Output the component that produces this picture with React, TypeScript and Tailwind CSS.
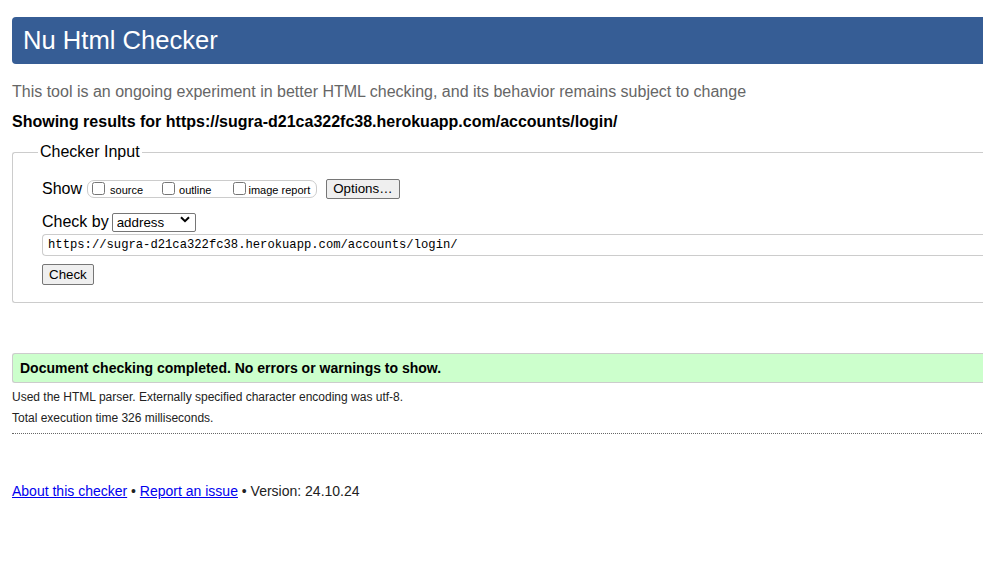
import { useState } from 'react'

const url = 'https://sugra-d21ca322fc38.herokuapp.com/accounts/login/'

function Chevron() {
  return (
    <svg width="10" height="7" viewBox="0 0 10 7" className="pointer-events-none absolute right-[6px] top-[6px]">
      <path d="M1 1.2 L5 5.2 L9 1.2" fill="none" stroke="#000" strokeWidth="2" />
    </svg>
  )
}

export default function App() {
  const [checks, setChecks] = useState({ source: false, outline: false, images: false })
  const [doc, setDoc] = useState(url)

  return (
    <div className="min-h-[563px] w-full overflow-hidden bg-white font-['Liberation_Sans',Arial,sans-serif] text-black">
      <div className="w-[1100px] pl-3 pt-[17px]">
        <h1 className="h-[47px] rounded-l-[4px] bg-[#365d95] pl-[11px] text-[25.6px] leading-[47px] text-white">
          Nu Html Checker
        </h1>
        <p className="mt-[19px] text-[16px] leading-[18px] text-[#666]">
          This tool is an ongoing experiment in better HTML checking, and its behavior remains subject to change
        </p>
        <p className="mt-[12px] text-[16px] font-bold leading-[18px]">Showing results for {url}</p>

        <fieldset className="mt-[12px] rounded-l-[3px] border border-r-0 border-[#ccc] pb-[17px] pl-[29px] pt-[17px]">
          <legend className="-ml-[4px] px-[2px] text-[16px] leading-[18px]">Checker Input</legend>

          <div className="flex h-[21px] items-center">
            <span className="text-[16px] leading-[18px]">Show</span>
            <div className="ml-[5px] flex h-[18px] items-center rounded-[7px] border border-[#ccc] pl-[4px] pr-[6px] text-[11px]">
              <label className="flex items-center">
                <input
                  type="checkbox"
                  className="m-0 h-[13px] w-[13px]"
                  checked={checks.source}
                  onChange={() => setChecks({ ...checks, source: !checks.source })}
                />
                <span className="ml-[5px] pt-[3px]">source</span>
              </label>
              <label className="ml-[19px] flex items-center">
                <input
                  type="checkbox"
                  className="m-0 h-[13px] w-[13px]"
                  checked={checks.outline}
                  onChange={() => setChecks({ ...checks, outline: !checks.outline })}
                />
                <span className="ml-[4px] pt-[3px]">outline</span>
              </label>
              <label className="ml-[22px] flex items-center">
                <input
                  type="checkbox"
                  className="m-0 h-[13px] w-[13px]"
                  checked={checks.images}
                  onChange={() => setChecks({ ...checks, images: !checks.images })}
                />
                <span className="ml-[2px] pt-[3px]">image report</span>
              </label>
            </div>
            <button className="ml-[9px] h-[20px] rounded-[2px] border border-[#767676] bg-[#efefef] px-[6px] text-[13.33px] leading-[18px]">
              Options…
            </button>
          </div>

          <div className="mt-[13px] flex h-[20px] items-center">
            <span className="text-[16px] leading-[18px]">Check by</span>
            <div className="relative ml-[3px]">
              <select className="h-[19px] w-[84px] appearance-none rounded-[2px] border border-[#767676] bg-white pl-[4px] text-[13.33px] leading-[17px]">
                <option>address</option>
                <option>file upload</option>
                <option>text input</option>
              </select>
              <Chevron />
            </div>
          </div>

          <input
            type="text"
            value={doc}
            onChange={(e) => setDoc(e.target.value)}
            className="mt-[2px] block h-[22px] w-full rounded-l-[4px] border border-r-0 border-[#ccc] pl-[5px] font-['Liberation_Mono','Courier_New',monospace] text-[12.2px] outline-none"
          />

          <button className="mt-[8px] block h-[21px] rounded-[2px] border border-[#767676] bg-[#efefef] px-[6px] text-[13.33px] leading-[19px]">
            Check
          </button>
        </fieldset>

        <div className="mt-[50px] h-[30px] rounded-l-[3px] border border-r-0 border-[#ccc] bg-[#ccffcc] pl-[7px] text-[14px] font-bold leading-[28px]">
          Document checking completed. No errors or warnings to show.
        </div>
        <p className="mt-[7px] text-[12px] leading-[14px] text-[#222]">
          Used the HTML parser. Externally specified character encoding was utf-8.
        </p>
        <p className="mt-[7px] text-[12px] leading-[14px] text-[#222]">Total execution time 326 milliseconds.</p>
        <div className="mt-[8px] border-t border-dotted border-[#666]" />

        <p className="mt-[49px] text-[14px] leading-[16px] text-[#222]">
          <a href="#" className="text-[#00e] underline">About this checker</a> •{' '}
          <a href="#" className="text-[#00e] underline">Report an issue</a> • Version: 24.10.24
        </p>
      </div>
    </div>
  )
}
